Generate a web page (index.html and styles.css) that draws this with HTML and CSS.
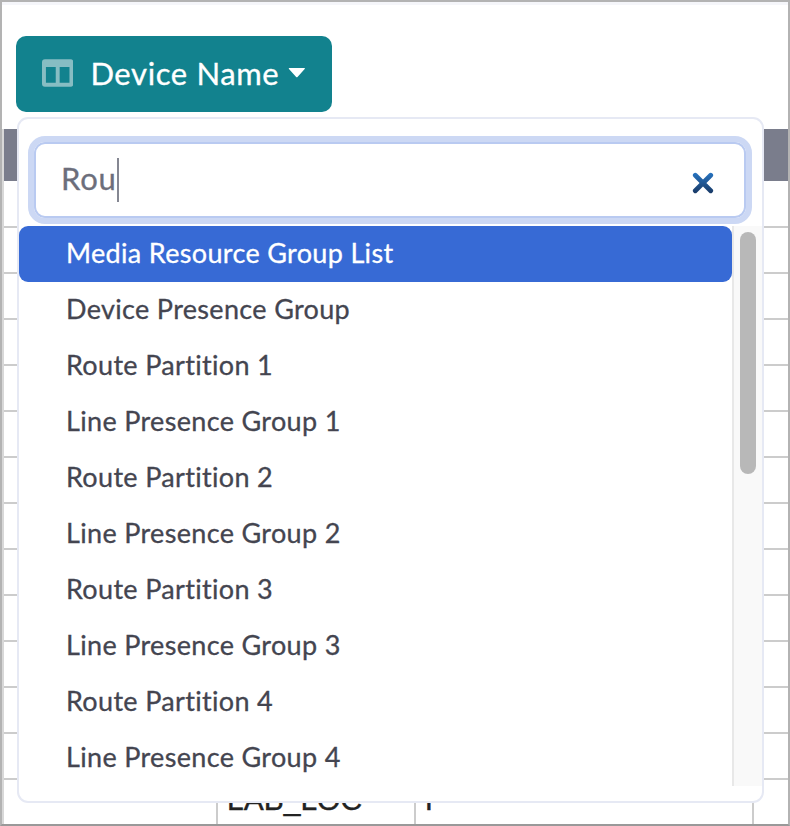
FILE: index.html
```html
<!DOCTYPE html>
<html lang="en">
<head>
<meta charset="utf-8">
<title>Device Name</title>
<link rel="stylesheet" href="styles.css">
</head>
<body>
<main class="page">
  <header class="toolbar">
    <button class="column-button">
      <svg class="columns-icon" width="32" height="28" viewBox="0 0 32 28"><path fill="#87bdc3" fill-rule="evenodd" d="M3 0H29Q32 0 32 3V25Q32 28 29 28H3Q0 28 0 25V3Q0 0 3 0ZM4 8V24H14V8ZM18 8V24H28V8Z"/></svg>
      <span class="column-label">Device Name</span>
      <svg class="caret" width="18" height="10" viewBox="0 0 18 10"><path fill="#fff" d="M1 0H17Q17.500 .6 17 1L9.700 9Q9 9.700 8.300 9L1 1Q.5 .6 1 0Z"/></svg>
    </button>
  </header>
  <section class="table">
    <div class="table-head"></div>
    <div class="row"></div><div class="row"></div><div class="row"></div><div class="row"></div><div class="row"></div><div class="row"></div><div class="row"></div><div class="row"></div><div class="row"></div><div class="row"></div><div class="row"></div><div class="row"></div><div class="row"></div>
    <div class="row last"><span class="cell"></span><span class="cell">LAB_LOC</span><span class="cell">P</span><span class="cell"></span></div>
  </section>
  <section class="menu">
    <div class="search">
      <span class="query">Rou</span><i class="cursor"></i>
      <svg class="clear" width="22" height="22" viewBox="0 0 22 22"><defs><linearGradient id="blue" gradientUnits="userSpaceOnUse" x1="0" y1="0" x2="0" y2="22"><stop offset="0" stop-color="#2876c4"/><stop offset="1" stop-color="#183762"/></linearGradient></defs><path d="M3.300 3.300L18.700 18.700M18.700 3.300L3.300 18.700" fill="none" stroke="url(#blue)" stroke-width="4.800" stroke-linecap="round"/></svg>
    </div>
    <div class="results">
      <ul class="options">
        <li class="option selected">Media Resource Group List</li>
        <li class="option">Device Presence Group</li>
        <li class="option">Route Partition 1</li>
        <li class="option">Line Presence Group 1</li>
        <li class="option">Route Partition 2</li>
        <li class="option">Line Presence Group 2</li>
        <li class="option">Route Partition 3</li>
        <li class="option">Line Presence Group 3</li>
        <li class="option">Route Partition 4</li>
        <li class="option">Line Presence Group 4</li>
      </ul>
      <div class="scrollbar"><div class="thumb"></div></div>
    </div>
  </section>
</main>
</body>
</html>
```
FILE: styles.css
```css
* { box-sizing: border-box; }
body { margin: 0; background: #fff; font-family: Lato, "Noto Sans", sans-serif; }
.page { position: relative; width: 790px; height: 826px; overflow: hidden; border: 2px solid #b3b3b3; border-bottom-color: #999; }
.toolbar { height: 127px; padding: 31px 14px 0; border-top: 3px solid #f5f6fa; }
.column-button { display: flex; align-items: center; width: 316px; height: 76px; padding: 0 26px; border: 0; border-radius: 10px; background: #12828e; color: #fff; font: 31px Lato, sans-serif; }
.columns-icon { margin-top: -3px; }
.column-label { width: 189px; margin: -3px 0 0 17px; white-space: nowrap; text-align: left; letter-spacing: .62px; -webkit-text-stroke: .3px currentColor; }
.caret { margin-left: 9px; margin-top: -2px; }
.table-head { height: 52px; background: #7a7d8c; }
.table { border-left: 2px solid #d8d8d8; }
.row { height: 46px; border-bottom: 2px solid #ccc; }
.table-head + .row { height: 47px; }
.last { display: grid; grid-template-columns: 214px 198px 338px 1fr; border: 0; font: 30px/40px "Liberation Sans", sans-serif; color: #222; }
.cell { padding-left: 9px; border-right: 2px solid #ccc; -webkit-text-stroke: .4px currentColor; }
.cell:last-child { border: 0; }
.menu { position: absolute; left: 15px; top: 115px; width: 747px; height: 686px; padding-top: 17px; border: 2px solid #e6e9f4; border-radius: 11px; background: #fff; }
.search { display: flex; align-items: center; height: 88px; width: 724px; margin-left: 9px; padding: 0 32px 0 27px; border: 6px solid #ccd8f4; border-radius: 17px; box-shadow: inset 0 0 0 2px #b9caf1; color: #6c6e7b; font-size: 31px; }
.query { letter-spacing: .8px; margin-top: -4px; white-space: nowrap; -webkit-text-stroke: .3px currentColor; }
.cursor { width: 2px; height: 44px; background: #858792; }
.clear { margin-left: auto; margin-top: 5px; }
.results { display: grid; grid-template-columns: 713px 1fr; height: 560px; margin-top: 2px; }
.options { list-style: none; margin: 0; padding: 0; }
.option { height: 56px; padding-left: 47px; color: #444550; font-size: 27px; line-height: 53px; letter-spacing: .33px; white-space: nowrap; -webkit-text-stroke: .3px currentColor; }
.selected { background: #376ad5; color: #fff; border-radius: 9px; }
.scrollbar { border-left: 2px solid #e8e8e8; background: #f9f9f9; padding: 6px 0 0 6px; }
.thumb { width: 16px; height: 242px; border-radius: 8px; background: #b8b8b8; }
```
